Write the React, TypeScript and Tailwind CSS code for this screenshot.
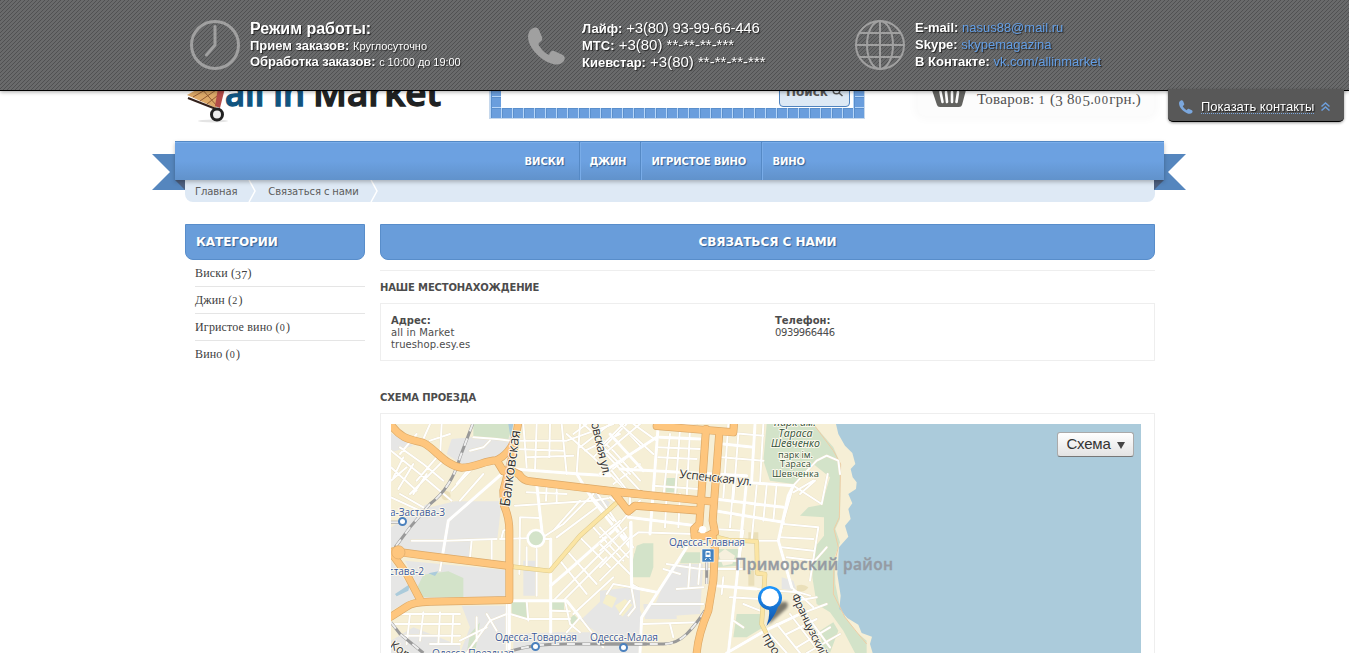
import React from "react";

const suburb =
  "M33 110 L120 180 L215 260 M33 160 L110 230 M60 120 L110 60 M90 240 L200 130 M110 200 L170 130 M33 200 L80 160 M60 240 L130 280 M150 80 L210 60 M130 75 L150 30 M185 30 L180 130 M60 100 L130 150 L190 200 M215 230 L280 160 M240 260 L310 180 M33 250 L120 290 M70 130 L40 190 M100 150 L55 225 M140 180 L100 240";

const streetsWest = [
  suburb,
  "M280 70 L350 75 L390 80 L560 80 L700 30",
  "M400 165 L600 180 L690 185",
  "M430 30 L440 160 M470 30 L465 170 M510 30 L508 130 M545 30 L560 180 M600 30 L590 180 M440 130 L580 125 M400 105 L550 110",
  "M560 60 L640 130 L750 240 M610 30 L700 110 L780 200 M600 100 L690 30 M640 130 L740 30 M680 180 L780 100 M650 90 L780 230 M700 210 L780 150 M720 30 L780 95 M580 60 L620 30 M615 110 L720 60",
  "M405 275 L640 260 L700 250 M470 210 L488 370 M500 215 L498 260 M530 220 L530 265 M440 235 L560 240",
  "M420 310 L418 480 M420 310 L480 312 M360 375 L440 373 M495 375 L512 375 L512 655 M440 400 L440 455 M470 405 L470 545 M380 440 L380 717 M365 370 L370 350 L385 345",
  "M512 515 L570 465 L700 350 L780 260 M530 370 L650 280 M520 350 L600 260 M488 370 L550 330 M550 330 L640 240",
  "M590 180 L640 260 L750 400 M620 230 L700 320 M640 220 L720 340 L760 400 M560 410 L650 510 M600 370 L690 460 M640 340 L730 440 M540 440 L620 540 M680 310 L750 390 M580 600 L700 490 M550 560 L680 430 M520 560 L620 460 L720 360",
  "M750 370 L755 510 L780 525 M700 510 L755 520 M680 540 L700 510 M755 525 L765 580 L745 605",
  "M400 560 L560 560 L600 610 L670 700 M390 600 L440 615 L570 615 M440 560 L445 620 M510 590 L570 592 M555 560 L570 630 L600 655 M600 610 L560 655",
  "M365 180 L205 320 L180 470 M95 380 L200 380 L350 375 M270 430 L275 380 M335 380 L335 440",
  "M50 600 L240 600 M45 630 L240 630 M60 665 L240 665 M90 600 L80 690 M130 595 L120 680 M180 595 L175 690 M220 600 L215 690 M150 690 L240 690",
  "M260 717 L330 620 L380 600 M290 610 L290 680 M240 680 L320 640 M320 600 L350 650",
  "M240 150 L270 160 L230 210 M270 110 L310 100 L330 80",
];

const avenuesWest = [
  "M400 165 L600 180 L690 185",
  "M470 210 L488 370",
  "M512 375 L512 655",
  "M512 515 L570 465 L700 350",
  "M590 180 L640 260 L750 400",
  "M388 565 V717",
  "M388 560 H560 L600 610",
  "M365 180 L205 320 L185 440",
  "M750 370 L755 510",
];

const streetsEast = [
  "M0 130 L120 30 M0 100 L70 30 M0 180 L170 70 M30 60 L130 170 M0 90 L90 180 M60 30 L160 120 M100 30 L170 80 M35 170 L90 240 L90 280",
  "M175 30 L150 360 M210 60 L190 250 M240 45 L225 250 M270 45 L260 250 M210 30 L290 35",
  "M180 70 L300 75 M170 100 L300 105 M175 130 L290 135 M60 165 L440 185 M160 215 L295 225",
  "M370 90 L460 100 M385 30 L370 250 M415 60 L400 260 M465 30 L455 200 M490 30 L480 210 M365 130 L490 140 M370 55 L490 65",
  "M435 205 L580 215 L545 340 M345 255 L550 280 M345 290 L550 325 M340 345 L430 350 M440 200 L420 400 M470 215 L455 380 M500 215 L490 320 M530 210 L520 320 M400 210 L390 340",
  "M580 215 L650 140 L680 125 L715 140 L720 180 M580 215 L665 270 L683 180 M580 235 L640 200 M600 240 L645 200",
  "M440 380 L535 380 L545 340 M535 380 L575 520 L640 580 M550 330 L655 340 L630 500",
  "M540 370 L640 375 M545 400 L640 410 M560 430 L645 440 L680 400",
  "M85 310 L290 335 M90 325 L95 520 L170 535 M95 370 L115 355 L280 360 M30 250 L95 300 M200 240 L195 340 M240 240 L235 340",
  "M260 400 L125 610 L120 717 M200 450 L300 465 L430 465 M190 465 L240 480 M270 450 L265 520 M300 450 L295 510 M230 525 L310 520 M150 570 L310 570 M130 630 L300 625 M210 630 L220 670",
  "M430 350 L410 500 L385 717 M345 515 L470 525 L590 535 M370 490 L365 540 M390 550 L480 555 M350 440 L410 440",
  "M380 717 L495 650 L600 600 L680 570 M500 650 L560 717 M530 630 L600 717 M570 600 L660 717 M610 590 L690 700 M560 660 L650 615 M590 700 L690 640 M620 717 L720 660",
  "M0 370 L60 320 M0 410 L80 340 M0 460 L90 370 M0 340 L85 430 M0 390 L90 480 M0 500 L90 410 M60 600 L90 560",
  "M580 530 L630 545 M590 560 L650 550 M430 570 L480 590 M400 620 L430 640",
];

const avenuesEast = [
  "M435 205 L580 215 L565 245 L535 380 L575 520",
  "M380 717 L495 650 L600 600",
  "M260 400 L125 610 L120 717",
  "M175 30 L150 360",
  "M60 165 L440 185",
  "M180 70 L300 75",
  "M345 255 L550 280",
  "M345 290 L550 325",
  "M440 200 L410 500 L385 717",
  "M370 90 L460 100",
  "M465 30 L455 200",
  "M85 310 L290 335",
  "M93 325 L95 520 L170 535",
  "M345 515 L470 525",
  "M30 60 L130 170",
  "M0 180 L170 70",
];

const orangeWest = [
  "M33 32 C65 78 95 76 128 86 C165 102 195 155 245 161 C290 160 312 140 350 139 C385 120 408 90 414 30",
  "M350 139 L370 172 L390 168 L418 182 Q430 200 450 202 L700 232 L780 240",
  "M405 95 L370 230 L372 275 Q388 310 388 350 L388 558 L150 563 Q95 565 80 578 L33 608",
  "M40 412 L130 424 L388 456",
  "M40 425 L80 480 L122 560",
];
const orangeEast = [
  "M0 229 L330 262",
  "M170 36 L400 55 L402 30",
  "M318 45 L298 330 L282 345 L284 368 L325 365 L345 355 L338 320 L358 55",
  "M336 360 L345 405 L340 500 L325 590 Q295 660 290 717",
  "M45 240 L85 292 L105 275 L300 290",
];

function Lines({ d, stroke, width }: { d: string[]; stroke: string; width: number }) {
  return (
    <g fill="none" stroke={stroke} strokeWidth={width} strokeLinejoin="round" strokeLinecap="round">
      {d.map((p) => (
        <path key={p} d={p} />
      ))}
    </g>
  );
}

const WEST = "translate(-11 -10) scale(0.33333)";
const EAST = "translate(209 -10) scale(0.33333)";

function CityMap() {
  const halo = { stroke: "#fbf8ec", strokeWidth: 2, paintOrder: "stroke" as const, strokeLinejoin: "round" as const };
  return (
    <svg width="750" height="229" viewBox="0 0 750 229" className="block">
      <defs>
        <linearGradient id="pin" x1="0" y1="0" x2="0" y2="1">
          <stop offset="0" stopColor="#1e98ff" />
          <stop offset="1" stopColor="#1152a8" />
        </linearGradient>
        <filter id="soft" x="-50%" y="-50%" width="200%" height="200%">
          <feGaussianBlur stdDeviation="1.6" />
        </filter>
      </defs>
      <rect width="750" height="229" fill="#f6efd6" />
      <g transform={WEST}>
        <g fill="#e6e6e5">
          <path d="M275 70 H400 L375 135 L300 140 L250 155 L200 120 L215 75Z M33 58 L100 95 L33 115Z" />
          <path d="M225 262 H365 L352 375 L272 378 L272 432 L80 412 L58 395 L90 350 L150 280Z" />
          <path d="M33 340 L80 310 L140 270 L200 320 L100 380 L33 400Z" />
          <path d="M75 440 L375 468 V548 L130 552Z M33 440 L110 550 L33 590Z" />
          <path d="M245 575 H380 V717 H240 L270 640Z M33 680 L100 640 L240 695 V717 H33Z" />
          <path d="M600 620 L690 535 L780 520 V640 L650 655Z M430 440 H470 V545 H430Z M540 655 H780 V717 H400 V660Z M640 235 l50 30 l-20 40z" />
        </g>
        <g fill="#d3e3c9">
          <path d="M280 30 H400 L385 75 L280 68Z M130 482 L205 472 L250 492 V550 H120 L112 520Z M395 563 H442 V614 L395 605Z M512 565 H552 V594 H512Z M562 620 L582 602 L597 617 L577 636Z M762 420 L780 405 V488 L762 480Z M270 660 L300 625 L285 717 H260Z" />
        </g>
        <circle cx="198" cy="245" r="14" fill="#ebe0bd" />
        <path d="M680 540 l30 15 l-10 30 l-28 -12z M705 570 l25 -15 l20 15 l-25 40z" fill="#f6efcb" />
        <path d="M45 540 L90 510 L85 530 L50 547Z M145 478 L175 472 L165 486Z M385 30 H400 L392 72Z" fill="#abcbdb" />
      </g>
      <g transform={EAST}>
        <path d="M0 530 L90 520 L125 600 L110 717 H0Z M215 450 H310 L300 600 L150 610Z M130 570 h100 v45 h-95z M545 490 L580 500 L590 530 L545 525Z" fill="#e6e6e5" />
        <path d="M20 540 l30 12 l-14 30 l-28 -15z M45 575 l30 -20 l22 18 l-30 35z" fill="#f6efcb" />
        <g fill="#d3e3c9">
          <path d="M500 30 H640 L700 100 L722 150 L720 315 L706 345 L720 385 L704 430 L706 510 L722 590 L770 655 L800 680 V717 H765 L730 650 L690 595 L650 570 L637 490 L640 405 L672 365 L672 310 L600 305 L625 280 L665 272 L690 190 L640 150 L580 210 L510 200 L490 140Z" />
          <path d="M110 395 L130 388 L160 388 V460 L150 490 H98 V440Z M250 415 H300 V448 H240Z M350 405 H415 V455 L350 460Z M198 192 H232 V235 H198Z M410 600 H480 L490 640 L440 670 L400 670Z M660 650 L700 625 L715 650 L690 717 H670Z" />
        </g>
        <path d="M355 420 l20 -15 l30 20 l-8 25 l-28 5z" fill="#f6f0dd" />
        <path d="M445 355 h30 v22 h-30z M445 470 h18 v45 h-18z M590 515 q20 -8 35 5 q-10 18 -35 10z" fill="#eadfb9" />
        <path d="M708 30 L715 60 L735 95 L757 117 L766 150 L752 165 L758 190 L770 205 L768 225 L745 240 L757 268 L745 285 L752 315 L735 335 L745 368 L717 400 L712 480 L722 545 L718 585 L742 612 L775 632 L785 657 L816 668 L810 690 L818 717 H1640 V30Z" fill="#abcbdb" />
        <path d="M640 30 L700 110 L722 150 L718 310 L702 345 L715 400 L702 450 L700 540 L735 610 L775 660 L800 690" fill="none" stroke="#efcda5" strokeWidth="3" />
      </g>
      <g transform={WEST}>
        <Lines d={streetsWest} stroke="#e8dfc4" width={8} />
        <Lines d={streetsWest} stroke="#fff" width={6} />
        <Lines d={avenuesWest} stroke="#fff" width={9} />
        <circle cx="468" cy="373" r="25" fill="#d3e3c9" stroke="#fff" strokeWidth="8" />
      </g>
      <g transform={EAST}>
        <Lines d={streetsEast} stroke="#e8dfc4" width={8} />
        <Lines d={streetsEast} stroke="#fff" width={6} />
        <Lines d={avenuesEast} stroke="#fff" width={9} />
      </g>
      <g fill="none">
        <g transform={WEST}>
          <path d="M278 30 L240 130 Q215 220 150 270 L90 340 L45 400 M33 325 H60 M33 625 L60 660 L130 717 M380 717 Q440 690 560 690 L800 690" stroke="#999" strokeWidth="9" />
          <path d="M278 30 L240 130 Q215 220 150 270 L90 340 L45 400 M33 325 H60 M33 625 L60 660 L130 717 M380 717 Q440 690 560 690 L800 690" stroke="#eee" strokeWidth="6" strokeDasharray="24 22" />
        </g>
        <g transform={EAST}>
          <path d="M320 445 V510 M315 590 Q290 630 260 660 Q230 690 190 690 H0" stroke="#999" strokeWidth="9" />
          <path d="M320 445 V510 M315 590 Q290 630 260 660 Q230 690 190 690 H100" stroke="#eee" strokeWidth="6" strokeDasharray="24 22" />
        </g>
      </g>
      {[
        { t: WEST, d: ["M395 458 L510 471 L600 365 L715 262"] },
        { t: EAST, d: ["M345 345 L352 370 L385 378 L470 382 L472 478 L495 480 L485 630 L500 660"] },
      ].map(({ t, d }) => (
        <g key={t} transform={t}>
          <Lines d={d} stroke="#ddc98c" width={14} />
          <Lines d={d} stroke="#fbe5a4" width={11} />
        </g>
      ))}
      <g transform={WEST}>
        <Lines d={orangeWest} stroke="#dca968" width={24} />
      </g>
      <g transform={EAST}>
        <Lines d={orangeEast} stroke="#dca968" width={24} />
      </g>
      <g transform={WEST}>
        <Lines d={orangeWest} stroke="#fec67e" width={20} />
        <circle cx="55" cy="415" r="20" fill="#fec67e" stroke="#dca968" strokeWidth="2" />
      </g>
      <g transform={EAST}>
        <Lines d={orangeEast} stroke="#fec67e" width={20} />
        <circle cx="308" cy="347" r="11" fill="#fff" />
      </g>

      <g fontFamily="Open Sans, sans-serif" fill="#333" style={halo}>
        <text transform="translate(118.5 83) rotate(-82)" fontSize="14" textLength="77">Балковская</text>
        <text transform="translate(197 -14) rotate(77)" fontSize="12.5" textLength="68">нковская ул.</text>
        <text transform="translate(288 54) rotate(6)" fontSize="12" textLength="73">Успенская ул.</text>
        <text transform="translate(400 172) rotate(64)" fontSize="11.5" textLength="78">Французский б</text>
        <text transform="translate(371 212) rotate(60)" fontSize="12.5">просп.</text>
        <text transform="translate(-2 223) rotate(34)" fontSize="12">Кордон</text>
      </g>
      <g style={halo} fontSize="10.5" fontFamily="Open Sans, sans-serif" textAnchor="middle" fill="#2f4f38">
        <g fontStyle="italic">
          <text x="404" y="2">парк им.</text>
          <text x="404.500" y="12.500" textLength="34">Тараса</text>
          <text x="404.500" y="23" textLength="49">Шевченко</text>
        </g>
        <g fontSize="9.3">
          <text x="404.500" y="33.500" textLength="35">парк ім.</text>
          <text x="404.500" y="43" textLength="31">Тараса</text>
          <text x="404.500" y="52.500" textLength="47">Шевченка</text>
        </g>
      </g>
      <g style={halo} fill="#3c5a9c" fontFamily="Open Sans, sans-serif" fontSize="10.2">
        <text x="-1" y="92" textLength="55">а-Застава-3</text>
        <text x="-2" y="151" textLength="35">става-2</text>
        <text x="104" y="217" textLength="82">Одесса-Товарная</text>
        <text x="199" y="217" textLength="68">Одесса-Малая</text>
        <text x="41" y="233" textLength="82">Одесса-Поездная</text>
        <text x="278" y="122" textLength="76">Одесса-Главная</text>
      </g>
      <g fill="#fff" stroke="#4a80bd" strokeWidth="2">
        <circle cx="11.500" cy="97.500" r="3.500" />
        <circle cx="144.500" cy="222.500" r="3.500" />
        <circle cx="232.500" cy="223.500" r="3.500" />
      </g>
      <g transform="translate(311 125)">
        <rect width="12" height="13" fill="#4382c0" stroke="#fff" strokeWidth=".6" />
        <path d="M4.500 2h3q1 0 1 1v5h-5v-5q0-1 1-1z" fill="#fff" />
        <path d="M3 11l1.500-2M9 11l-1.500-2" stroke="#fff" />
        <rect x="4.500" y="3.700" width="3" height="2" fill="#4382c0" />
      </g>
      <g fontFamily="Open Sans, sans-serif" fontWeight="600" fontSize="15.500">
        <text x="344" y="146" textLength="158" fill="#959ba3" stroke="#959ba3" strokeWidth=".4">
          Приморский район
        </text>
      </g>
      <path d="M377 201 L384 181 Q400 173 396 184 Z" fill="#000" opacity=".5" filter="url(#soft)" />
      <path d="M375.500 202 Q379 193 378 186 A12 12 0 1 1 387 183 Q384 192 375.500 202Z" fill="url(#pin)" />
      <circle cx="379" cy="173.500" r="9" fill="#fff" />
    </svg>
  );
}

function HandsetIcon({ className }: { className: string }) {
  return (
    <svg viewBox="0 0 38 38" className={className} fill="currentColor">
      <path d="M1 5C4 0 9-1 11 3l3 7q1 3-2 5q-3 2 0 5q4 6 9 8q2-5 5-4l9 4q3 2 1 6q-4 5-11 3C12 34-4 17 1 5Z" />
    </svg>
  );
}

function TopBar() {
  return (
    <div className="fixed inset-x-0 top-0 z-20 h-[91px] border-b border-black bg-[#666] bg-[linear-gradient(135deg,#505152_12.5%,#696a6b_12.5%,#696a6b_50%,#505152_50%,#505152_62.5%,#696a6b_62.5%)] bg-[size:4px_4px] pl-[190px] pt-5 font-['Liberation_Sans',sans-serif] text-white shadow-[0_1px_4px_rgba(0,0,0,0.35)]">
      <div className="flex text-[13px] leading-[17px] whitespace-nowrap [text-shadow:1px_1px_1px_#222]">
        <div className="flex w-[338px]">
          <svg viewBox="0 0 50 50" className="mr-[10px] h-[50px] w-[50px]" fill="none" stroke="#a0a0a0">
            <circle cx="25" cy="25" r="23.500" strokeWidth="3" />
            <path d="M25 6.500V25L16.500 35" strokeWidth="3" strokeLinecap="round" strokeLinejoin="round" />
          </svg>
          <div>
            <div className="h-[17px] text-base leading-[17px] font-bold">Режим работы:</div>
            <div className="h-4 leading-[17px]"><b>Прием заказов:</b> <span className="text-[11px] leading-none">Круглосуточно</span></div>
            <div className="h-4 leading-[17px] tracking-[-0.05px]"><b>Обработка заказов:</b> <span className="text-[11px] leading-none">с 10:00 до 19:00</span></div>
          </div>
        </div>
        <div className="flex w-[327px]">
          <HandsetIcon className="mt-[7px] mr-[16px] h-[38px] w-[38px] text-[#a0a0a0]" />
          <div className="-mt-px text-[15px]">
            <div className="h-[17px] tracking-[-0.25px]"><b className="text-[13px] leading-none tracking-normal">Лайф:</b> +3(80) 93-99-66-446</div>
            <div className="h-[17px]"><b className="text-[13px] leading-none">МТС:</b> +3(80) **-**-**-***</div>
            <div className="h-[17px]"><b className="text-[13px] leading-none">Киевстар:</b> +3(80) **-**-**-***</div>
          </div>
        </div>
        <div className="flex">
          <svg viewBox="0 0 50 50" className="mr-[10px] h-[50px] w-[50px]" fill="none" stroke="#a0a0a0" strokeWidth="2">
            <circle cx="25" cy="25" r="24" />
            <ellipse cx="25" cy="25" rx="13" ry="24" />
            <path d="M25 1V49M1 25H49M5 13H45M5 37H45" />
          </svg>
          <div className="-mt-px font-bold">
            <div>E-mail: <a className="font-normal text-[#649fe6]">nasus88@mail.ru</a></div>
            <div>Skype: <a className="font-normal text-[#649fe6]">skypemagazina</a></div>
            <div>В Контакте: <a className="font-normal text-[#649fe6]">vk.com/allinmarket</a></div>
          </div>
        </div>
      </div>
    </div>
  );
}

function ContactsTab() {
  return (
    <div className="fixed top-[89px] left-[1168px] z-30 flex h-[33px] w-[176px] items-center rounded-b-[5px] border-b border-black bg-[#585858] pl-[11px] font-['Liberation_Sans',sans-serif] text-[13px] text-white shadow-[0_1px_3px_rgba(0,0,0,0.4)]">
      <HandsetIcon className="mt-[3px] mr-[8px] h-[14px] w-[14px] text-[#7ba7dd]" />
      <span className="mt-[3px] h-[15px] border-b border-dotted border-[#7ba7dd] leading-[16px] whitespace-nowrap [text-shadow:1px_1px_1px_#111]">Показать контакты</span>
      <svg viewBox="0 0 9 9" className="mt-[3px] ml-[7px] h-[9px] w-[9px]" fill="none" stroke="#6d9fdd" strokeWidth="1.500">
        <path d="M.5 4.500L4.500 1L8.500 4.500M.5 8.500L4.500 5L8.500 8.500" />
      </svg>
    </div>
  );
}

/* Georgia-like text figures: 0-2 at x-height, 3-5, 7 and 9 descending. */
function OldStyle({ text }: { text: string }) {
  return (
    <>
      {text.split(/([012]+|[34579]+)/).map((part, i) =>
        /^[012]/.test(part) ? (
          <span key={i} className="text-[0.84em] leading-none tracking-[1.2px]">{part}</span>
        ) : /^[34579]/.test(part) ? (
          <span key={i} className="relative top-[2px] leading-none">{part}</span>
        ) : (
          part
        ),
      )}
    </>
  );
}

function Header() {
  return (
    <header className="flex h-[141px] items-start pl-[185px]">
      <svg width="265" height="125" viewBox="0 0 265 125" className="mr-[40px]">
        <path d="M2 95L22 84L40 88L31 108Z" fill="#dda968" />
        <path d="M8 97L27 86M15 101L34 88M22 104L37 92M16 88L32 106" stroke="#925d35" strokeWidth="1" />
        <path d="M33 88L40 88L35 108L30 106Z" fill="#b34c48" />
        <path d="M3 98L31 109" stroke="#33211c" strokeWidth="2" />
        <ellipse cx="28" cy="121" rx="15" ry="1.500" fill="#e4e4e4" />
        <circle cx="32" cy="114.500" r="5.500" fill="#eee" stroke="#222" strokeWidth="3" />
        <g fontFamily="Open Sans, sans-serif" fontWeight="600" fontSize="36" strokeWidth="1.300">
          <text x="40" y="105.500" fill="#10547f" stroke="#10547f" textLength="80" lengthAdjust="spacingAndGlyphs">all in</text>
          <text x="128" y="105.500" fill="#202223" stroke="#202223" textLength="128" lengthAdjust="spacingAndGlyphs">Market</text>
        </g>
      </svg>
      <div className="h-[118px] w-[374px] bg-[linear-gradient(to_right,#b7d6f8_1px,#5a8fcc_1px,#5a8fcc_2px,transparent_2px),linear-gradient(to_bottom,#b7d6f8_1px,#5a8fcc_1px,#5a8fcc_2px,transparent_2px),linear-gradient(#6a9edd,#6a9edd)] bg-[size:11px_11px] bg-[position:0_8px] px-[11px] pb-[10px] shadow-[0_0_0_1px_#c6d8ec]">
        <div className="flex h-full items-end justify-end bg-white pr-[3px] pb-px">
          <div className="flex h-[30px] w-[71px] items-center justify-center gap-1 rounded border border-[#4f83bf] bg-[#dde9f5] pb-px font-['DejaVu_Sans',sans-serif] text-[12px] font-bold text-[#555]">
            Поиск
            <svg width="11" height="11" viewBox="0 0 11 11" fill="none" stroke="#555" strokeWidth="1.500"><circle cx="4.500" cy="4.500" r="3.300" /><path d="M7 7L10.500 10" /></svg>
          </div>
        </div>
      </div>
      <div className="ml-[54px] flex h-[116px] w-[236px] items-end rounded-b-lg bg-[#fcfcfc] pb-[8px] pl-[13px] shadow-[0_0_8px_4px_rgba(0,0,0,0.025)]">
        <svg width="36" height="30" viewBox="0 0 36 30" className="mr-[10px]">
          <path d="M1 12H35L31 27Q30.500 29 28 29H9Q6.500 29 6 27Z" fill="#62625f" />
          <path d="M9.500 14L11.500 24M15 14L16 24M21 14V24M27 14L25.500 24" stroke="#fcfcfc" strokeWidth="2.600" strokeLinecap="round" />
        </svg>
        <span className="-mb-px font-['Liberation_Serif',serif] text-[15px] leading-[20px] tracking-[0.27px] whitespace-nowrap text-[#505050]">
          <OldStyle text="Товаров: 1 (3 805.00грн.)" />
        </span>
      </div>
    </header>
  );
}

const menu = [
  { label: "ВИСКИ", cls: "w-[65px] pl-[10px]" },
  { label: "ДЖИН", cls: "w-[61px] pl-[10px] tracking-[-0.3px]" },
  { label: "ИГРИСТОЕ ВИНО", cls: "w-[121px] pl-[11px] tracking-[-0.12px]" },
  { label: "ВИНО", cls: "w-[60px] pl-[11px] tracking-[-0.1px]" },
];

function Nav() {
  return (
    <nav className="relative ml-[175px] h-[39px] w-[989px]">
      <svg width="33" height="49" viewBox="0 0 33 49" className="absolute top-0 left-[-23px]">
        <path d="M0 13H33V49H0L18 31Z" fill="#5586be" />
        <path d="M23 39H33V49Z" fill="#4d6080" />
      </svg>
      <svg width="32" height="49" viewBox="0 0 32 49" className="absolute top-0 left-[979px]">
        <path d="M32 13H0V49H32L14 31Z" fill="#5586be" />
        <path d="M10 39H0V49Z" fill="#4d6080" />
      </svg>
      <div className="relative z-10 flex h-[39px] justify-center border-t border-[#5388c4] bg-linear-to-b from-[#6ca1e1] from-50% to-[#6192cb] pr-[3px] shadow-[inset_0_1px_0_#7aaeea,0_2px_4px_rgba(0,0,0,0.25)]">
        {menu.map((m, i) => (
          <a
            key={m.label}
            className={
              "flex items-center border-[#5589c5] font-['DejaVu_Sans',sans-serif] text-[10px] font-bold whitespace-nowrap text-white [text-shadow:1px_1px_1px_#335f92] " +
              (i < 3 ? "border-r shadow-[1px_0_0_#79ace8] " : "") +
              m.cls
            }
          >
            {m.label}
          </a>
        ))}
      </div>
    </nav>
  );
}

function Crumb({ children }: { children: React.ReactNode }) {
  return (
    <div className="flex items-center">
      <span>{children}</span>
      <svg width="9" height="22" viewBox="0 0 9 22" className="ml-[11px]" fill="none" stroke="#fff" strokeWidth="1.500">
        <path d="M1 0L7 11L1 22" />
      </svg>
    </div>
  );
}

function Heading({ children, className }: { children: React.ReactNode; className: string }) {
  return (
    <div className={"flex h-9 items-center rounded-b-lg border border-[#588dca] bg-[#699dda] pb-px font-['DejaVu_Sans',sans-serif] text-[12px] font-bold tracking-[-0.05px] text-white [text-shadow:1px_1px_1px_#335f92] " + className}>
      {children}
    </div>
  );
}

const categories = ["Виски (37)", "Джин (2)", "Игристое вино (0)", "Вино (0)"];

export default function App() {
  return (
    <div className="h-[653px] w-[1349px] overflow-hidden bg-white">
      <TopBar />
      <ContactsTab />
      <Header />
      <Nav />
      <div className="ml-[185px] flex h-[22px] w-[970px] gap-[11px] rounded-b-lg bg-[#dee9f5] pl-[10px] font-['DejaVu_Sans',sans-serif] text-[10px] tracking-[-0.12px] text-[#5c5c5c]">
        <Crumb>Главная</Crumb>
        <Crumb>Связаться с нами</Crumb>
      </div>
      <div className="mt-[22px] ml-[185px] flex w-[970px] gap-[15px]">
        <aside className="w-[180px]">
          <Heading className="pl-[10px]">КАТЕГОРИИ</Heading>
          <ul className="ml-[10px] font-['Liberation_Serif',serif] text-[12px] tracking-[0.15px] text-[#404040]">
            {categories.map((c) => (
              <li key={c} className="h-[27px] border-b border-[#e5e5e5] leading-[27px] last:border-0">
                <OldStyle text={c} />
              </li>
            ))}
          </ul>
        </aside>
        <main className="w-[775px] font-['DejaVu_Sans',sans-serif] text-[10px] leading-3 text-[#4c4c4c]">
          <Heading className="justify-center">СВЯЗАТЬСЯ С НАМИ</Heading>
          <h2 className="mt-[10px] border-t border-[#eee] pt-[11px] font-bold tracking-[-0.14px]">НАШЕ МЕСТОНАХОЖДЕНИЕ</h2>
          <section className="mt-[9px] flex h-[58px] border border-[#eee] pt-[11px] pl-[10px]">
            <div className="w-[384px]">
              <b>Адрес:</b>
              <br /><span className="tracking-[0.15px]">all in Market</span>
              <br /><span className="tracking-[0.07px]">trueshop.esy.es</span>
            </div>
            <div>
              <b>Телефон:</b>
              <br /><span className="tracking-[-0.4px]">0939966446</span>
            </div>
          </section>
          <h2 className="mt-[31px] font-bold tracking-[-0.14px]">СХЕМА ПРОЕЗДА</h2>
          <section className="mt-[9px] h-[250px] border border-[#eee] pt-[10px] pl-[10px]">
            <div className="relative w-[750px]">
              <CityMap />
              <button className="absolute top-2 right-[7px] flex h-[25px] w-[77px] items-center justify-center gap-[6px] rounded-[3px] border border-[#aaa] border-b-[#777] bg-linear-to-b from-white to-[#e3e3e3] pb-[2px] font-['Liberation_Sans',sans-serif] text-[15px] tracking-[-0.2px] text-[#333]">
                Схема
                <svg width="8" height="7" viewBox="0 0 8 7" className="mt-[3px]"><path d="M0 0H8L4 7Z" fill="#444" /></svg>
              </button>
            </div>
          </section>
        </main>
      </div>
    </div>
  );
}
